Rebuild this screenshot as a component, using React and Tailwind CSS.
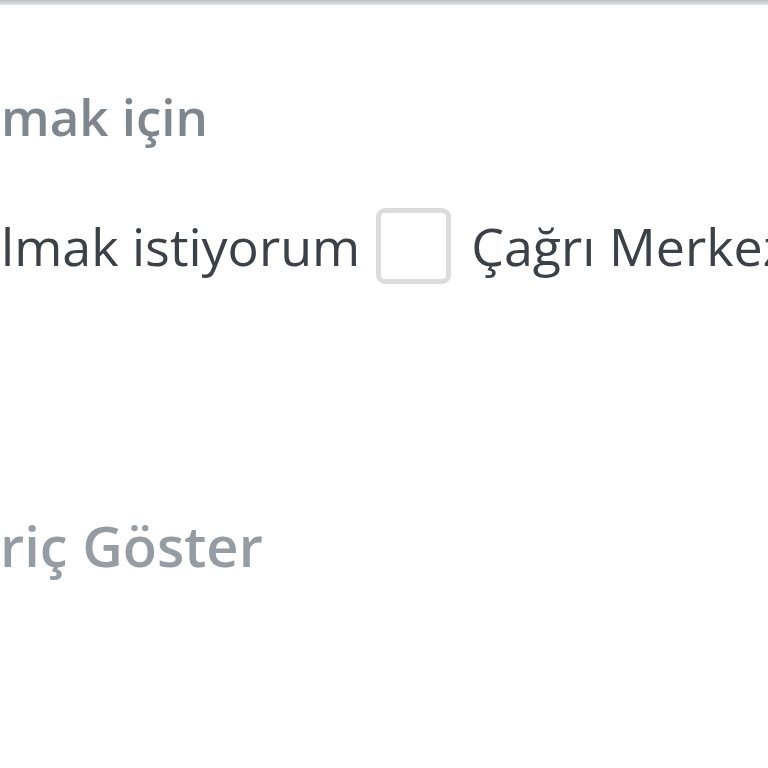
export default function App() {
  return (
    <main
      className="relative h-[768px] w-[768px] overflow-hidden bg-white"
      style={{ fontFamily: '"Open Sans", "Noto Sans", sans-serif' }}
    >
      <div className="h-[5px] w-full bg-gradient-to-b from-[#bdbec2] to-[#e4e5e8]" />
      <div className="flex flex-col">
        <p className="mt-[76px] whitespace-nowrap pl-[1px] text-[51px] font-semibold leading-[70px] text-[#80868e]">
          mak için
        </p>
        <div className="mt-[57px] flex items-center overflow-hidden whitespace-nowrap">
          <span className="pl-[1px] text-[52px] leading-[70px] text-[#3c4147]">lmak istiyorum</span>
          <span className="ml-[16px] h-[76px] w-[75px] shrink-0 rounded-[9px] border-[5px] border-[#dcdcdc] bg-white" />
          <span className="ml-[20px] text-[52px] leading-[70px] text-[#3c4147]">Çağrı Merkezi</span>
        </div>
        <p className="mt-[226px] whitespace-nowrap text-[56px] font-semibold leading-[70px] text-[#959ca4]">
          riç Göster
        </p>
      </div>
    </main>
  );
}
